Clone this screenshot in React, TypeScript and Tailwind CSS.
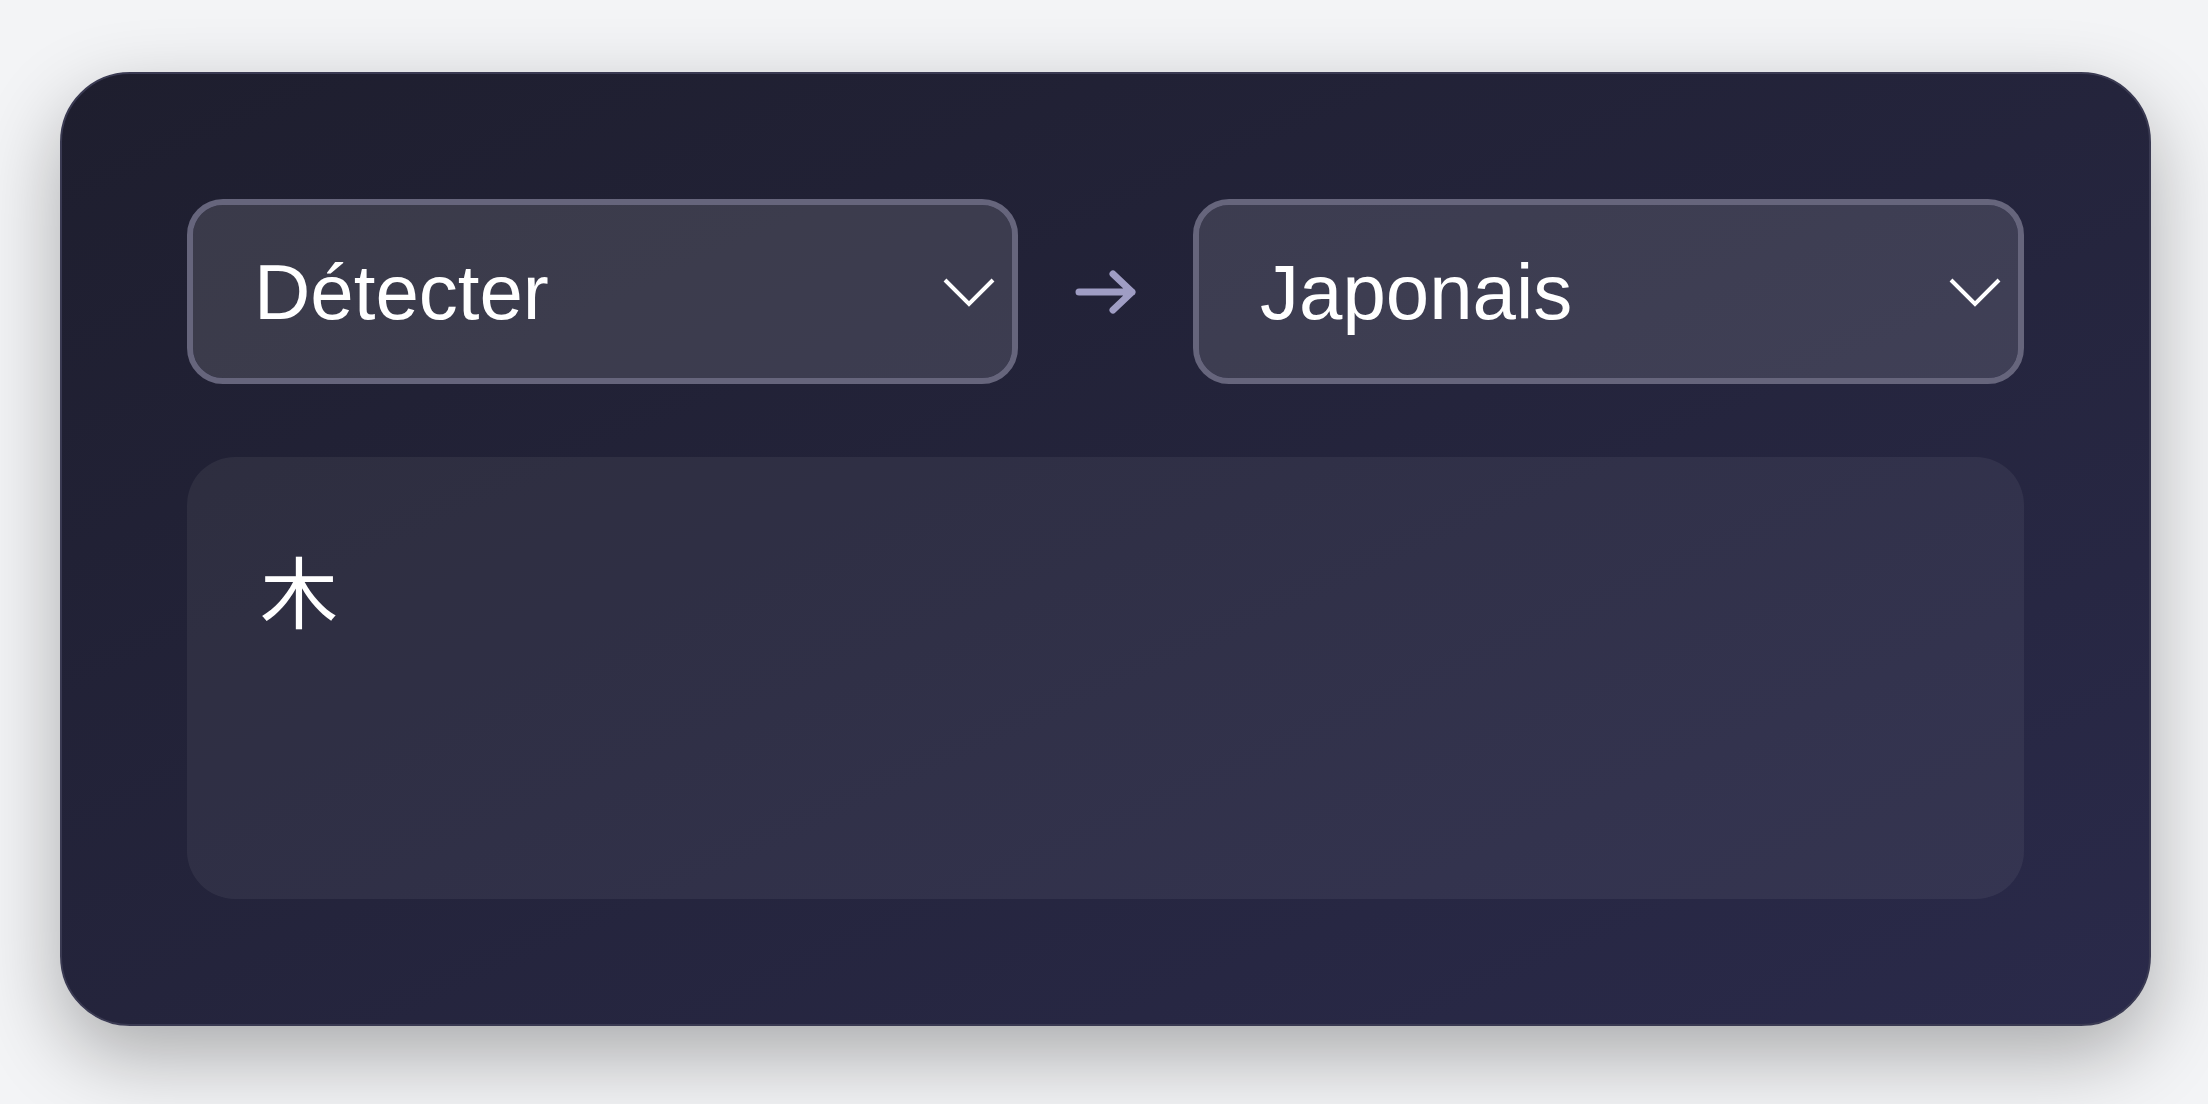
const font = { fontFamily: '"Liberation Sans", "Noto Sans CJK JP", Arial, sans-serif' };

const Chevron = () => (
  <svg width="52" height="30" viewBox="0 0 52 30" fill="none">
    <path d="M2 3 L26 27 L50 3" stroke="white" strokeWidth="4" />
  </svg>
);

const Arrow = () => (
  <svg width="62" height="50" viewBox="0 0 62 50" fill="none">
    <path d="M4 25 H57 M38 7 L57 25 L38 43" stroke="#9f9dc4" strokeWidth="7" strokeLinecap="round" strokeLinejoin="round" />
  </svg>
);

const LangSelect = ({ label }: { label: string }) => (
  <button className="flex h-[185px] items-center justify-between rounded-[36px] border-[6px] border-[#66657c] bg-white/[0.12] bg-clip-padding pl-[61px] pr-[17px] text-left">
    <span className="text-[78px] leading-none text-white">{label}</span>
    <Chevron />
  </button>
);

export default function App() {
  return (
    <div className="min-h-screen bg-[#f3f4f6] pl-[60px] pt-[72px]" style={font}>
      <div className="w-[2091px] rounded-[70px] border-2 border-[#3a3a52] bg-gradient-to-br from-[#1e1e2e] to-[#2a2a4a] p-[125px] shadow-[0_30px_80px_rgba(0,0,0,0.3)]">
        <div className="grid grid-cols-[1fr_175px_1fr] items-center">
          <LangSelect label="Détecter" />
          <div className="flex justify-center">
            <Arrow />
          </div>
          <LangSelect label="Japonais" />
        </div>
        <div className="mt-[73px] h-[442px] rounded-[48px] bg-white/[0.06] px-[73px] pt-[81px] text-[78px] leading-normal text-white">
          木
        </div>
      </div>
    </div>
  );
}
